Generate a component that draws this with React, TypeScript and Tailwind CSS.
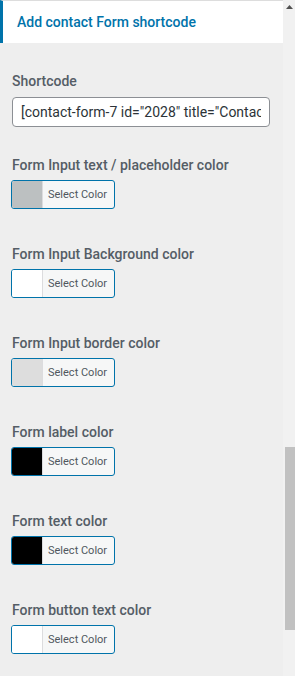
import React from "react";

const colorFields = [
  { label: "Form Input text / placeholder color", swatch: "bg-[#bcc0c1]" },
  { label: "Form Input Background color", swatch: "bg-white" },
  { label: "Form Input border color", swatch: "bg-[#dddddd]" },
  { label: "Form label color", swatch: "bg-black" },
  { label: "Form text color", swatch: "bg-black" },
  { label: "Form button text color", swatch: "bg-white" },
];

function ColorPicker({ label, swatch }: { label: string; swatch: string }) {
  return (
    <div className="h-[89px]">
      <div className="h-[20px] text-[14px] leading-[20px] font-medium text-[#555d66] whitespace-nowrap">
        {label}
      </div>
      <button className="mt-[5px] -ml-px flex h-[29px] w-[104px] overflow-hidden rounded-[3px] border border-[#0073aa] bg-[#f6f7f7] p-0 text-left">
        <span className={`block h-full w-[31px] border-r border-[#dcdcde] ${swatch}`} />
        <span className="pl-[5px] text-[11px] leading-[27px] text-[#50575e]">Select Color</span>
      </button>
    </div>
  );
}

export default function App() {
  return (
    <div className="flex h-[676px] w-[295px] overflow-hidden bg-[#eeeeee] font-['Roboto',sans-serif]">
      <div className="w-[283px] shrink-0">
        <div className="flex h-[43px] items-center border-l-[3px] border-t border-[#0073aa] border-t-[#dddddd] bg-white pl-[14px]">
          <h3 className="text-[14px] font-medium text-[#0073aa]">Add contact Form shortcode</h3>
        </div>

        <div className="px-[12px] pt-[28px]">
          <div className="h-[20px] text-[14px] leading-[20px] font-medium text-[#555d66]">Shortcode</div>
          <input
            readOnly
            value={'[contact-form-7 id="2028" title="Contact form 1"]'}
            className="mt-[6px] block h-[30px] w-[258px] rounded-[4px] border border-[#8c8f94] bg-white px-[8px] text-[14px] text-[#2c3338] outline-none"
          />

          <div className="pt-[28px]">
            {colorFields.map((f) => (
              <ColorPicker key={f.label} label={f.label} swatch={f.swatch} />
            ))}
          </div>
        </div>
      </div>

      {/* page scrollbar */}
      <div className="flex w-[12px] shrink-0 flex-col bg-[#f1f1f1]">
        <div className="flex h-[14px] items-center justify-center">
          <svg width="7" height="4" viewBox="0 0 7 4">
            <polygon points="3.5,0 7,4 0,4" fill="#505050" />
          </svg>
        </div>
        <div className="mt-[433px] ml-[2px] h-[183px] w-[10px] bg-[#c1c1c1]" />
      </div>
    </div>
  );
}
